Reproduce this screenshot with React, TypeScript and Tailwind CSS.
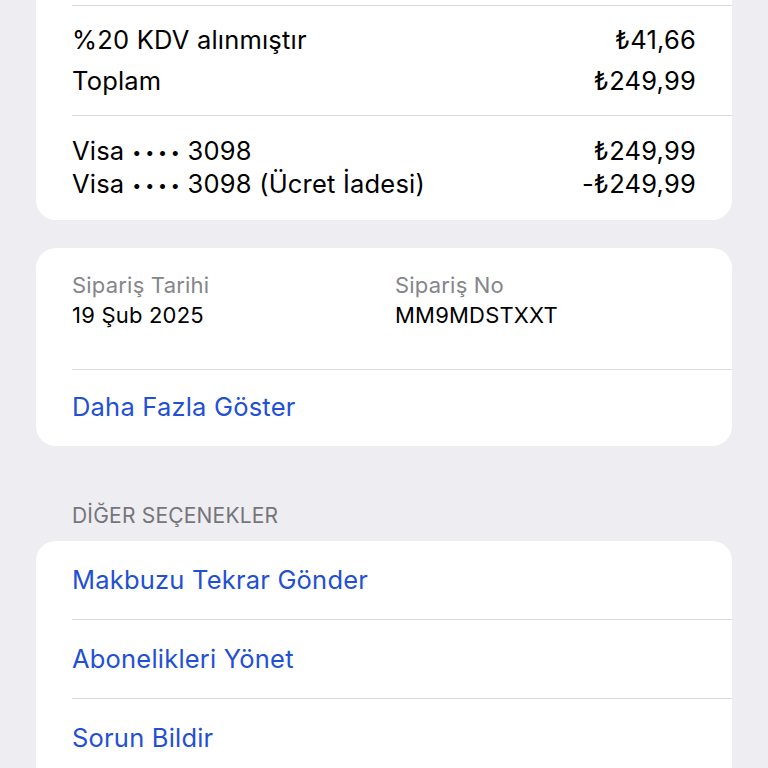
import React from "react";

const font = { fontFamily: "Inter, 'Noto Sans', sans-serif" };

function Dots() {
  return (
    <span className="inline-block text-[16px] tracking-[3.8px] align-[2px] ml-[8px] mr-[4px]">••••</span>
  );
}

function Row({ left, right, h }: { left: React.ReactNode; right: string; h: string }) {
  return (
    <div className={`flex items-center justify-between ${h}`}>
      <span>{left}</span>
      <span>{right}</span>
    </div>
  );
}

export default function App() {
  return (
    <div
      className="w-[768px] h-[768px] overflow-hidden bg-[#ededf2] text-black"
      style={font}
    >
      <div className="px-[36px]">
        {/* Top card (continues above viewport) */}
        <div className="-mt-[20px] bg-white rounded-b-[20px] pl-[36px] text-[25.5px] tracking-[0.2px]">
          <div className="h-[25px]" />
          <div className="h-px bg-[#dcdce0]" />
          <div className="pr-[36px] pt-[14px] pb-[13px]">
            <Row left="%20 KDV alınmıştır" right="₺41,66" h="h-[41px]" />
            <Row left="Toplam" right="₺249,99" h="h-[41px]" />
          </div>
          <div className="h-px bg-[#dcdce0]" />
          <div className="pr-[36px] pt-[19px] pb-[19px]">
            <Row left={<>Visa<Dots />3098</>} right="₺249,99" h="h-[33px]" />
            <Row left={<>Visa<Dots />3098 (Ücret İadesi)</>} right="-₺249,99" h="h-[33px]" />
          </div>
        </div>

        {/* Order info card */}
        <div className="mt-[28px] bg-white rounded-[20px] pl-[36px]">
          <div className="grid grid-cols-[323px_1fr] pt-[22px] pb-[38px] text-[22px] tracking-[0.2px]">
            <div>
              <div className="h-[30px] leading-[30px] text-[#85858a]">Sipariş Tarihi</div>
              <div className="h-[31px] leading-[31px]">19 Şub 2025</div>
            </div>
            <div>
              <div className="h-[30px] leading-[30px] text-[#85858a]">Sipariş No</div>
              <div className="h-[31px] leading-[31px]">MM9MDSTXXT</div>
            </div>
          </div>
          <div className="h-px bg-[#dcdce0]" />
          <div className="h-[76px] flex items-center text-[25.5px] tracking-[0.2px] text-[#1f50d6] pb-[2px]">
            Daha Fazla Göster
          </div>
        </div>

        {/* Section header */}
        <div className="pl-[36px] h-[95px] flex items-end pb-[12px] text-[21px] text-[#75757a] tracking-[0.2px]">
          <span className="leading-[26px]">DİĞER SEÇENEKLER</span>
        </div>

        {/* Options card */}
        <div className="bg-white rounded-t-[20px] pl-[36px] text-[25.5px] tracking-[0.2px] text-[#1f50d6]">
          <div className="h-[78px] flex items-center">Makbuzu Tekrar Gönder</div>
          <div className="h-px bg-[#dcdce0]" />
          <div className="h-[78px] flex items-center">Abonelikleri Yönet</div>
          <div className="h-px bg-[#dcdce0]" />
          <div className="h-[78px] flex items-center">Sorun Bildir</div>
        </div>
      </div>
    </div>
  );
}
